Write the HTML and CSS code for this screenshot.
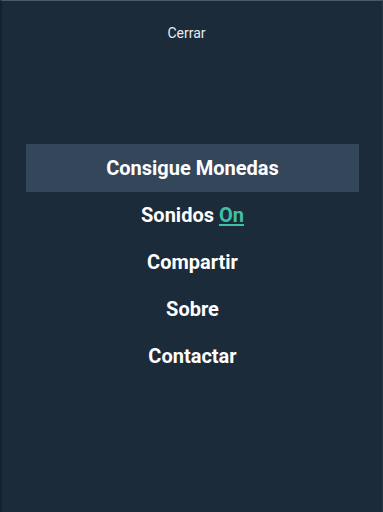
FILE: index.html
```html
<!DOCTYPE html>
<html lang="es">
<head>
    <meta charset="UTF-8">
    <meta name="viewport" content="width=device-width, initial-scale=1.0">
    <title>Menu</title>
    <link rel="stylesheet" href="styles.css">
</head>
<body>
    <div class="screen">
        <div class="close">Cerrar</div>
        <ul class="menu">
            <li class="menu-item active">Consigue Monedas</li>
            <li class="menu-item">Sonidos <span class="toggle">On</span></li>
            <li class="menu-item">Compartir</li>
            <li class="menu-item">Sobre</li>
            <li class="menu-item">Contactar</li>
        </ul>
    </div>
</body>
</html>
```

FILE: styles.css
```css
html, body {
    margin: 0;
    height: 100%;
}
body {
    font-family: Roboto, "Liberation Sans", sans-serif;
    background-color: #1c2b3a;
}
.screen {
    box-sizing: border-box;
    height: 100%;
    border-left: 2px solid #142230;
    border-right: 1px solid #2a3a4a;
    border-top: 1px solid #4a5868;
}
.close {
    text-align: center;
    color: #e8ecef;
    font-size: 14px;
    padding: 24px 11px 0 0;
    line-height: 16px;
}
.menu {
    list-style: none;
    margin: 103px 0 0 0;
    padding: 0;
}
.menu-item {
    text-align: center;
    color: #ffffff;
    font-weight: bold;
    font-size: 20px;
    line-height: 47px;
    margin: 0 23px 0 24px;
}
.menu-item.active {
    background-color: #34475a;
    line-height: 48px;
}
.toggle {
    color: #3fc1a5;
    text-decoration: underline;
    text-underline-offset: 2px;
}
```
